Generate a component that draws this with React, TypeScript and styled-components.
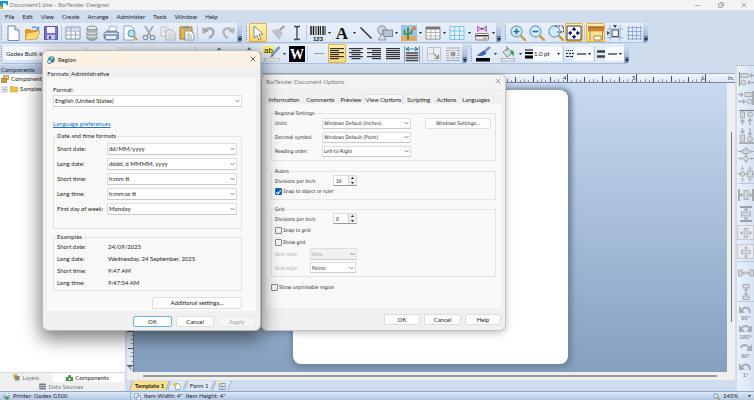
import React from 'react';
import styled, { createGlobalStyle, css } from 'styled-components';

const Global = createGlobalStyle`
  * { box-sizing: border-box; }
  html, body { margin: 0; height: 100%; overflow: hidden; }
  body { font-family: Lato, "Open Sans", sans-serif; font-size: 6px; line-height: 8px; color: #1e1e1e; }
  button, input, select, fieldset, legend { margin: 0; padding: 0; border: 0; min-width: 0; font: inherit; color: inherit; }
  button { background: none; }
`;

const Window = styled.div`
  position: relative;
  display: flex;
  flex-direction: column;
  height: 100vh;
  overflow: hidden;
  background: #cfdcee;
`;

/* ---------- title bar and menu ---------- */

const TitleBar = styled.header`
  display: flex;
  align-items: center;
  height: 10px;
  padding-right: 6px;
  background: #f3f3f3;
  color: #808080;
`;
const AppTitle = styled.h1`
  flex: 1;
  margin: 0 0 0 2px;
  font-size: 6px;
  font-weight: 400;
`;
const Caption = styled.button`
  display: grid;
  place-items: center;
  width: 23px;
  height: 10px;
  &:last-child { width: 9px; margin-left: 7px; }
`;
const MenuBar = styled.nav`
  display: flex;
  align-items: center;
  gap: 8px;
  height: 13px;
  padding-left: 5px;
`;
const MenuItem = styled.button`
  color: #1c1c28;
`;

/* ---------- toolbars ---------- */

const ToolRow = styled.div`
  display: flex;
  gap: 4px;
  height: 20px;
  margin-bottom: 1px;
  padding-left: 1px;
`;
const Group = styled.div`
  display: flex;
  align-items: center;
  flex: none;
  height: 20px;
  border-bottom: 1px solid #aabfdd;
  border-radius: 2px;
  background: linear-gradient(#e7effa, #dbe6f5);
`;
const Handle = styled.span`
  flex: none;
  width: 3px;
  height: 15px;
  border-left: 1px dotted #8295b5;
`;
const Sep = styled.span`
  flex: none;
  width: 1px;
  height: 16px;
  margin: 0 1px;
  background: #b9cbe4;
`;
const Tool = styled.button<{ $w?: number; $on?: boolean }>`
  display: grid;
  place-items: center;
  flex: none;
  width: ${p => p.$w ?? 19}px;
  height: 19px;
  ${p => p.$on && css`
    border: 1px solid #e3b04c;
    border-radius: 1px;
    background: linear-gradient(#fff0b8, #ffd768);
  `}
`;
const Drop = styled.button<{ $w?: number }>`
  display: grid;
  place-items: center;
  flex: none;
  width: ${p => p.$w ?? 5}px;
  height: 19px;
`;
const Overflow = styled.button`
  display: grid;
  place-items: end center;
  flex: none;
  width: 5px;
  height: 19px;
  padding-bottom: 1px;
  border-radius: 0 2px 2px 0;
  background: linear-gradient(#d3e0f2, #8fa5c8);
`;
const ComboBox = styled.select<{ $w: number; $gap: number }>`
  appearance: none;
  width: ${p => p.$w}px;
  height: 13px;
  margin-right: ${p => p.$gap}px;
  padding-left: 2px;
  background: #f6f9fd;
`;
const StyleBox = styled.button<{ $w: number }>`
  display: flex;
  align-items: center;
  justify-content: space-between;
  width: ${p => p.$w}px;
  height: 14px;
  padding: 0 2px 0 1px;
  background: linear-gradient(90deg, transparent 9px, #f6f9fd 9px, #f6f9fd);
`;

/* ---------- workspace ---------- */

const Workspace = styled.main`
  display: grid;
  grid-template-columns: 125px minmax(0, 1fr) 17px;
  column-gap: 2px;
  flex: 1;
  min-height: 0;
`;
const SidePanel = styled.aside`
  display: flex;
  flex-direction: column;
  background: #ffffff;
`;
const SideTitle = styled.h2`
  height: 9px;
  margin: 0;
  padding-left: 1px;
  background: linear-gradient(#c3d2e6, #adc0da);
  font-size: 6px;
  line-height: 9px;
  font-weight: 400;
`;
const Tree = styled.ul`
  flex: 1;
  margin: 0;
  padding: 0;
  list-style: none;
`;
const TreeItem = styled.li`
  display: flex;
  align-items: center;
  gap: 2px;
  height: 10px;
  padding-left: 1px;
`;
const SideTabs = styled.div`
  display: flex;
  flex-wrap: wrap;
  height: 19px;
  border-top: 1px solid #d6d6d6;
  background: #f0f0f0;
`;
const SideTab = styled.button<{ $w: string; $active?: boolean }>`
  display: flex;
  align-items: center;
  justify-content: center;
  gap: 2px;
  width: ${p => p.$w};
  height: 9px;
  background: ${p => (p.$active ? '#ffffff' : 'transparent')};
  color: ${p => (p.$active ? '#1e1e1e' : '#747474')};
`;
const Editor = styled.section`
  display: grid;
  grid-template-columns: 7px minmax(0, 1fr) 8px;
  grid-template-rows: 10px minmax(0, 1fr) 8px 11px;
  margin-top: 8px;
`;
const RulerTop = styled.div`
  grid-column: 1 / -1;
  display: flex;
  padding-left: 7px;
  border-top: 1px solid #a4adbb;
  border-bottom: 1px solid #7b8798;
  background: linear-gradient(#f1f6fd, #dde7f5);
`;
const RulerLeft = styled.div`
  border-right: 1px solid #66748a;
  background: #e2ebf7;
`;
const Canvas = styled.div`
  display: flex;
  overflow: hidden;
  padding: 7px 0 8px 159px;
  background: linear-gradient(#c8daf1, #859fbf);
`;
const Label = styled.div`
  width: 275px;
  border-radius: 8px;
  background: #ffffff;
  box-shadow: 1px 1px 5px 3px #71869f;
`;
const ScrollY = styled.div`
  display: flex;
  justify-content: center;
  padding: 49px 0 50px;
  background: #efefef;
`;
const ScrollX = styled.div`
  grid-column: 1 / -1;
  display: flex;
  align-items: center;
  padding: 0 18px 0 16px;
  background: #efefef;
`;
const Thumb = styled.span<{ $vertical?: boolean }>`
  flex: ${p => (p.$vertical ? 'none' : '1')};
  width: ${p => (p.$vertical ? '1px' : 'auto')};
  height: ${p => (p.$vertical ? 'auto' : '2px')};
  background: ${p => (p.$vertical ? '#777777' : '#999999')};
`;
const PageTabs = styled.div`
  grid-column: 1 / -1;
  display: flex;
  align-items: center;
  gap: 1px;
  padding-left: 4px;
`;
const PageTab = styled.button<{ $active?: boolean }>`
  display: flex;
  align-items: center;
  height: 9px;
  padding: 0 3px;
  border: solid #9fb2ce;
  border-width: 0 1px;
  transform: skewX(-20deg);
  background: ${p => (p.$active ? '#ffdf86' : '#dfe9f6')};
  > * { transform: skewX(20deg); }
`;
const PageName = styled.span<{ $strong?: boolean }>`
  font-weight: ${p => (p.$strong ? 700 : 400)};
`;

/* ---------- right hand arrange bar ---------- */

const ArrangeBar = styled.div`
  display: flex;
  flex-direction: column;
  align-items: center;
  overflow: hidden;
  border-top: 1px dotted #8b9cb8;
  padding-top: 3px;
  background: linear-gradient(90deg, #eaf1fb, #d6e3f4);
`;
const ArrangeTool = styled.button<{ $framed?: boolean }>`
  display: grid;
  place-items: center;
  flex: none;
  width: 17px;
  height: 19px;
  ${p => p.$framed && css`
    height: 15px;
    margin: 2px 0;
    border: 1px solid #c5c9cf;
    background: #e9ebee;
  `}
`;
const ArrangeSep = styled.span`
  flex: none;
  width: 16px;
  height: 1px;
  margin-bottom: 1px;
  background: #b3c6e0;
`;

/* ---------- status bar ---------- */

const StatusBar = styled.footer`
  display: flex;
  align-items: center;
  flex: none;
  height: 9px;
  border-top: 1px solid #8ea8cd;
  background: linear-gradient(#dfe9f7, #b3c8e5);
`;
const StatusCell = styled.span<{ $w?: string }>`
  display: flex;
  align-items: center;
  gap: 3px;
  width: ${p => p.$w ?? 'auto'};
  height: 8px;
  padding-left: 3px;
  white-space: pre;
  & + & { border-left: 1px solid #9bb2d3; }
`;
const Fill = styled.span`
  flex: 1;
`;

/* ---------- dialogs ---------- */

const Dialog = styled.section<{ $x: number; $y: number; $w: number; $front?: boolean }>`
  position: absolute;
  left: ${p => p.$x}px;
  top: ${p => p.$y}px;
  width: ${p => p.$w}px;
  border-radius: 5px;
  overflow: hidden;
  background: #f0f0f0;
  box-shadow: ${p => (p.$front
    ? '0 0 0 1px #b9b9b9, 0 6px 18px 3px rgba(0, 0, 0, 0.5)'
    : '0 0 0 1px #c3c3c3, 0 2px 8px rgba(0, 0, 0, 0.3)')};
`;
const DialogTitle = styled.header<{ $front?: boolean }>`
  display: flex;
  align-items: center;
  gap: 3px;
  height: ${p => (p.$front ? 17 : 14)}px;
  margin-bottom: ${p => (p.$front ? 0 : 5)}px;
  padding: 0 4px;
  background: ${p => (p.$front ? '#f9f1e1' : '#f3f3f3')};
  color: ${p => (p.$front ? '#1e1e1e' : '#808080')};
`;
const DialogName = styled.h2`
  flex: 1;
  margin: 0;
  font-size: 6px;
  font-weight: 400;
`;
const TabStrip = styled.div`
  display: flex;
  align-items: flex-end;
  height: 10px;
  padding-left: 3px;
`;
const Tab = styled.button<{ $active?: boolean; $w: number }>`
  flex: none;
  width: ${p => p.$w}px;
  height: ${p => (p.$active ? 10 : 9)}px;
  border: 1px solid ${p => (p.$active ? '#e3e3e3' : '#ececec')};
  border-bottom: 0;
  background: ${p => (p.$active ? '#f9f9f9' : '#f1f1f1')};
  white-space: nowrap;
`;
const Sheet = styled.div<{ $pad: string; $compact?: boolean }>`
  display: flex;
  flex-direction: column;
  margin: 0 4px;
  padding: ${p => p.$pad};
  background: #f9f9f9;
  ${p => p.$compact && css`
    font-family: "DejaVu Sans Condensed", "DejaVu Sans", sans-serif;
    font-size: 5px;
  `}
`;
const Frame = styled.fieldset<{ $top: number; $bottom?: number; $mt?: number }>`
  display: block;
  margin-top: ${p => p.$mt ?? 4}px;
  padding: ${p => p.$top}px 4px ${p => p.$bottom ?? 2}px 3px;
  border: 1px solid #e4e4e4;
  legend { height: 8px; padding: 0 1px; margin-left: -1px; }
`;
const Line = styled.div<{ $h: number; $gap?: number }>`
  display: flex;
  align-items: center;
  flex: none;
  height: ${p => p.$h}px;
  margin-top: ${p => p.$gap ?? 0}px;
`;
const Name = styled.label<{ $w?: number; $muted?: boolean }>`
  flex: none;
  width: ${p => (p.$w ? `${p.$w}px` : 'auto')};
  color: ${p => (p.$muted ? '#a3a3a3' : 'inherit')};
  white-space: nowrap;
`;
const Picker = styled.span<{ $w?: number }>`
  display: grid;
  align-items: center;
  flex: ${p => (p.$w ? 'none' : '1')};
  width: ${p => (p.$w ? `${p.$w}px` : 'auto')};
  > * { grid-area: 1 / 1; }
  > svg { justify-self: end; margin-right: 2px; pointer-events: none; }
`;
const Select = styled.select<{ $h?: number }>`
  appearance: none;
  width: 100%;
  height: ${p => p.$h ?? 12}px;
  padding: 0 8px 0 1px;
  border: 1px solid #dedede;
  border-bottom-color: #c9c9c9;
  border-radius: 1px;
  background: #ffffff;
  opacity: 1;
  &:disabled { background: #f1f1f1; color: #a0a0a0; }
`;
const Link = styled.a`
  align-self: flex-start;
  margin-top: 12px;
  color: #1a76c9;
`;
const PushButton = styled.button<{ $w: number; $h?: number; $default?: boolean }>`
  width: ${p => p.$w}px;
  height: ${p => p.$h ?? 11}px;
  border: 1px solid ${p => (p.$default ? '#6ab2ea' : '#dedede')};
  border-radius: 2px;
  background: #fdfdfd;
  &:disabled { background: #f5f5f5; border-color: #e9e9e9; color: #a0a0a0; }
`;
const DialogFooter = styled.footer<{ $pad: string }>`
  display: flex;
  justify-content: flex-end;
  gap: 4px;
  padding: ${p => p.$pad};
`;
const Check = styled.input`
  appearance: none;
  display: grid;
  place-items: center;
  width: 7px;
  height: 7px;
  margin-right: 1px;
  border: 1px solid #8a8a8a;
  border-radius: 1px;
  background: #f7f7f7;
  &:checked { border-color: #1264b4; background: #1264b4; }
  &:checked::after {
    content: "";
    width: 2px;
    height: 4px;
    border: solid #ffffff;
    border-width: 0 1px 1px 0;
    transform: rotate(40deg);
  }
`;
const Spinner = styled.span`
  display: flex;
  width: 24px;
  height: 11px;
  border: 1px solid #dcdcdc;
  border-bottom-color: #9b9b9b;
  background: #ffffff;
`;
const SpinInput = styled.input`
  flex: 1;
  appearance: textfield;
  padding-left: 2px;
  background: transparent;
  &::-webkit-inner-spin-button { appearance: none; }
`;
const SpinButtons = styled.span`
  display: flex;
  flex-direction: column;
  width: 8px;
  background: #eeeeee;
  border-left: 1px solid #d4d4d4;
`;
const SpinButton = styled.button`
  display: grid;
  place-items: center;
  flex: 1;
`;

/* ---------- drawings ---------- */

type Draw = { children: React.ReactNode; w?: number; h?: number; box?: string };
const Svg = ({ children, w = 16, h = 16, box = '0 0 16 16' }: Draw) => (
  <svg width={w} height={h} viewBox={box} fill="none" aria-hidden="true">{children}</svg>
);
const Arrow = () => <Svg w={3} h={2} box="0 0 3 2"><path d="M0 0h3L1.500 2z" fill="#222" /></Svg>;
const Chevron = () => <Svg w={5} h={4} box="0 0 5 4"><path d="M.5 1l2 2 2-2" stroke="#777" strokeWidth=".8" /></Svg>;
const Cross = ({ c }: { c: string }) => <Svg w={6} h={6} box="0 0 6 6"><path d="M.7.7l4.600 4.600M5.300.7L.7 5.300" stroke={c} strokeWidth=".8" /></Svg>;
const More = () => <Svg w={4} h={5} box="0 0 4 5"><path d="M0 .5h4M0 2h4L2 5z" stroke="#23314f" strokeWidth=".5" fill="#23314f" /></Svg>;
const Lines = ({ mode }: { mode: 'l' | 'c' | 'r' | 'j' }) => (
  <Svg>
    {[0, 1, 2, 3, 4, 5].map(i => {
      const len = mode === 'j' || i % 2 === 0 ? 14 : 9;
      const x = mode === 'r' ? 15 - len : mode === 'c' ? 8 - len / 2 : 1;
      return <rect key={i} x={x} y={2 + i * 2} width={len} height="1.200" fill="#333" />;
    })}
  </Svg>
);
const Lens = ({ children }: { children?: React.ReactNode }) => (
  <Svg>
    <path d="M10 10l5 5" stroke="#c99b3f" strokeWidth="2.400" strokeLinecap="round" />
    <circle cx="6.500" cy="6.500" r="5.500" fill="#d2eefb" stroke="#7da7bd" strokeWidth="1.300" />
    {children}
  </Svg>
);

const icons: Record<string, React.ReactNode> = {
  newDoc: <Svg><path d="M3 1h7l4 4v10.500H3z" fill="#fff" stroke="#7588a8" /><path d="M10 1v4h4" fill="#dfe8f5" stroke="#7588a8" /></Svg>,
  open: <Svg><path d="M1 5l1-1h4l1 1h6v9H1z" fill="#d99a2b" /><path d="M3 8l13-2-3 8-12 1z" fill="#ffd873" stroke="#c98b25" strokeWidth=".6" /><path d="M8 3c2-2 5-1 6 1m.5-2.500V5h-3" stroke="#5687bd" strokeWidth="1.200" /></Svg>,
  save: <Svg><path d="M1.500 1.500h13v13h-13z" fill="#7d74cf" stroke="#5a52a8" /><rect x="4" y="2" width="8" height="6" fill="#f4f6fc" /><rect x="4" y="10" width="8" height="4.500" fill="#c9cdea" /><rect x="6" y="11" width="2" height="3" fill="#544ca3" /></Svg>,
  table: <Svg><path d="M1 2h14v12H1z" fill="#fff" stroke="#8694aa" /><path d="M1.500 2.500h13v2h-13z" fill="#c4d2e6" /><path d="M6 2v12M1 6h14M1 10h14M10.500 6v8" stroke="#9aa9c0" /></Svg>,
  db: <Svg><path d="M3 3v10c0 3 10 3 10 0V3" fill="#a9b3ba" stroke="#76828a" strokeWidth=".8" /><path d="M3 6.500c0 2.500 10 2.500 10 0M3 10c0 2.500 10 2.500 10 0" stroke="#e8edf0" /><ellipse cx="8" cy="3" rx="5" ry="2" fill="#dfe5e8" stroke="#76828a" strokeWidth=".8" /></Svg>,
  print: <Svg><path d="M5 7l2-6 7 1-2 6z" fill="#fff" stroke="#7f93b3" strokeWidth=".7" /><path d="M1 8l3-2h9l3 2v5l-3 2H3l-2-2z" fill="#8da2c1" stroke="#536a8e" strokeWidth=".7" /><path d="M3 11h10v3H3z" fill="#e9eff8" /><path d="M1.500 8.500h13" stroke="#dfe9f8" /></Svg>,
  preview: <Svg><path d="M2 1h7l3 3v11H2z" fill="#fff" stroke="#7f93b3" strokeWidth=".8" /><circle cx="9.500" cy="8.500" r="3.500" fill="#a8e1ef" stroke="#5a95a9" /><path d="M12 11l3 4" stroke="#d19b3c" strokeWidth="2" /></Svg>,
  cut: <Svg><path d="M4 1l6 10M12 1L6 11" stroke="#a0a5ac" strokeWidth="1.500" /><circle cx="4.500" cy="12.500" r="2.200" stroke="#8f949b" strokeWidth="1.300" /><circle cx="11.500" cy="12.500" r="2.200" stroke="#8f949b" strokeWidth="1.300" /></Svg>,
  copy: <Svg><path d="M1 2h6l2 2v7H1z" fill="#eceef1" stroke="#b3b8bf" strokeWidth=".8" /><path d="M6 5h6l3 3v7H6z" fill="#e6e8eb" stroke="#a6abb2" strokeWidth=".8" /><path d="M8 9h5M8 11h5M8 13h5M3 5h3M3 7h3" stroke="#bcc0c6" strokeWidth=".7" /></Svg>,
  paste: <Svg><path d="M1 2h12v12H1z" fill="#e9b64a" stroke="#a9772a" /><path d="M4 1h6v3H4z" fill="#8e98a6" /><path d="M6 6h6l3 3v6H6z" fill="#fff" stroke="#6f83a5" strokeWidth=".8" /><path d="M8 9h3M8 11h5M8 13h5" stroke="#6b7b96" strokeWidth=".7" /></Svg>,
  undo: <Svg><path d="M4 5c5-4 10 0 8 4-.5 2-2 3-4 4" stroke="#a7abb1" strokeWidth="2.400" /><path d="M1 2l1 7 6-3z" fill="#a7abb1" /></Svg>,
  redo: <Svg><path d="M12 5C7 1 2 5 4 9c.5 2 2 3 4 4" stroke="#b3b7bc" strokeWidth="2.400" /><path d="M15 2l-1 7-6-3z" fill="#b3b7bc" /></Svg>,
  pointer: <Svg><path d="M4 1v12l3-2.500 2 4.500 2-1-2-4.500 4-.5z" fill="#fff" stroke="#6c7f9e" strokeWidth=".9" /></Svg>,
  brush: <Svg><path d="M14.500 1l-6 5" stroke="#9b9b9b" strokeWidth="2" /><path d="M1 5l8-1 4 4-4 7z" fill="#c6c8ca" /><path d="M4 6l6 7M7 5l5 5" stroke="#a4a6a8" strokeWidth=".8" /></Svg>,
  ibeam: <Svg><path d="M5 1.500h2l1 1 1-1h2M5 14.500h2l1-1 1 1h2M8 2.500v11" stroke="#444" strokeWidth="1.300" /></Svg>,
  barcode: <Svg><path d="M1 1v9M3.500 1v9M8.500 1v9M13 1v9" stroke="#111" strokeWidth="1.400" /><path d="M6 1v9M10.500 1v9M15 1v9" stroke="#111" strokeWidth=".9" /><text x="8" y="15.500" fontSize="6" fontWeight="700" textAnchor="middle" fontFamily="Liberation Sans, sans-serif" fill="#111">123</text></Svg>,
  letter: <Svg><text x="8" y="13.500" fontSize="17" fontWeight="700" textAnchor="middle" fontFamily="Liberation Serif, serif" fill="#111">A</text></Svg>,
  line: <Svg><path d="M2.500 2.500l11 11" stroke="#222" strokeWidth="1.300" /></Svg>,
  shapes: <Svg><circle cx="5" cy="5" r="4.300" fill="#ccd5e0" stroke="#8593a6" /><rect x="6" y="5" width="9.500" height="6.500" fill="#b7c3d2" stroke="#7688a0" /><path d="M5 8l4 7H1.500z" fill="#d8dfe8" stroke="#8593a6" /></Svg>,
  picture: <Svg><rect width="16" height="16" fill="#9cc4e8" /><rect y="11" width="16" height="5" fill="#dfa95f" /><circle cx="13" cy="3.500" r="2" fill="#f2734d" /><path d="M7 14V3M3.500 5.500v3.500H7M10.500 5.500v3H7" stroke="#3f8a37" strokeWidth="1.700" strokeLinejoin="round" strokeLinecap="round" /></Svg>,
  form: <Svg><path d="M1 2h14v12H1z" fill="#fff" stroke="#777" strokeWidth=".8" /><path d="M1 2h14v2.500H1z" fill="#777" /><path d="M1 7.500h14M1 11h14M6 4v10M10.500 4v10" stroke="#a5a5a5" strokeWidth=".8" /></Svg>,
  cells: <Svg><path d="M1 1.500h14v13H1zM5.500 1.500v13M10.500 1.500v13M1 6h14M1 10.500h14" fill="#e6f5fd" stroke="#7cc4ea" /></Svg>,
  encoder: <Svg><path d="M3.500 1l3.500 2.700-3.500 2.800zM12.500 1L9 3.700l3.500 2.800z" fill="#e3b6ea" stroke="#b25bc0" strokeWidth=".9" /><circle cx="8" cy="3.700" r="1.300" fill="#a04ab0" /><rect x="1.500" y="8.500" width="13" height="6.500" rx="1" fill="#ededed" stroke="#777" strokeWidth=".9" /><path d="M2 10.700h12" stroke="#333" strokeWidth="1.400" /><path d="M9 13.300h4" stroke="#c77a39" /></Svg>,
  zoomIn: <Lens><path d="M3.500 6.500h6M6.500 3.500v6" stroke="#2f6d98" strokeWidth="1.600" /></Lens>,
  zoomOut: <Lens><path d="M3.500 6.500h6" stroke="#2f6d98" strokeWidth="1.600" /></Lens>,
  zoomSel: <Lens><path d="M7 1h8.500v6H9" stroke="#273e67" strokeWidth="1.200" strokeDasharray="2 1.200" /></Lens>,
  fit: <Svg><path d="M1 1h14v14H1z" fill="#fff" stroke="#3a3a3a" /><path d="M8 2l2.500 3h-5zM8 14l2.500-3h-5zM2 8l3-2.500v5zM14 8l-3-2.500v5z" fill="#12127c" /><path d="M8 4v2M8 10v2M4 8h2M10 8h2" stroke="#12127c" strokeWidth="1.400" /></Svg>,
  rulers: <Svg><rect x="0" y="1.500" width="16" height="4.500" fill="#e08e3a" stroke="#b06a23" strokeWidth=".6" /><path d="M2 2v2.500M4 2v1.500M6 2v2.500M8 2v1.500M10 2v2.500M12 2v1.500M14 2v2.500" stroke="#6b3b0c" strokeWidth=".7" /><path d="M2 6v9M14.500 6v9M6 11h7v4H6z" stroke="#8c8463" strokeWidth=".9" fill="#fffbea" /></Svg>,
  snap: <Svg><path d="M3 0v16M13 0v16M0 4h16M0 12.500h16" stroke="#93b4dc" /><rect x="5" y="5" width="6.500" height="6.500" fill="#eee" stroke="#555" /><path d="M6 0h4L8 3zM0 6v4l3-2z" fill="#27458e" /></Svg>,
  grid: <Svg><path d="M2.500 1v14M6.500 1v14M10.500 1v14M14.500 1v14M1 2.500h15M1 6.500h15M1 10.500h15M1 14h15" stroke="#8daedb" /></Svg>,
  bold: <Svg><text x="8" y="14" fontSize="15" fontWeight="700" textAnchor="middle" fontFamily="Liberation Serif, serif" fill="#222">B</text></Svg>,
  italic: <Svg><text x="8" y="14" fontSize="15" fontStyle="italic" textAnchor="middle" fontFamily="Liberation Serif, serif" fill="#222">I</text></Svg>,
  under: <Svg><text x="8" y="14" fontSize="15" fontWeight="700" textAnchor="middle" fontFamily="Liberation Serif, serif" fill="#222">U</text></Svg>,
  strike: <Svg><text x="8" y="14" fontSize="15" textAnchor="middle" fontFamily="Liberation Serif, serif" fill="#222">S</text></Svg>,
  fontUp: <Svg><path d="M4 7l4-4 4 4" stroke="#3f78b5" strokeWidth="2" /></Svg>,
  fontColor: <Svg><path d="M8 1l6 8H3z" fill="#3d7ba7" /><rect x="1" y="12" width="14" height="3" fill="#222" /></Svg>,
  highlight: <Svg w={18} box="0 0 18 16"><rect width="11" height="8" fill="#f7ef6c" /><text x="5.500" y="6.500" fontSize="8" textAnchor="middle" fontFamily="Liberation Sans, sans-serif" fill="#222">ab</text><path d="M16.500 1L9 9" stroke="#7898c6" strokeWidth="2.600" /><path d="M9 8l-2.500 3.500L11 10z" fill="#8c7a55" /><rect x="1.500" y="12.500" width="15" height="2.500" fill="#eee" stroke="#aaa" strokeWidth=".6" /></Svg>,
  white: <Svg><rect width="16" height="16" fill="#000" /><text x="8" y="13" fontSize="14" fontWeight="700" textAnchor="middle" fontFamily="Liberation Serif, serif" fill="#fff">W</text></Svg>,
  dash: <Svg><path d="M3 7.500h10" stroke="#9a9a9a" /></Svg>,
  fitText: <Svg><path d="M.7 0v16M15.300 0v16" stroke="#7a8797" /><path d="M2 3h12M5 1L2.500 3 5 5m6-4l2.500 2L11 5" stroke="#3a88a6" strokeWidth="1.200" /><path d="M2 7h12M2 9.500h12M2 12h12M2 14.500h12" stroke="#444" strokeWidth="1.300" /></Svg>,
  resize: <Svg><path d="M1.500 1.500h13v13h-13zM1.500 8h6V1.500" fill="#ececec" stroke="#c2c2c2" /><path d="M8 8l4 4m.5-3.500v4h-4" stroke="#8c8c8c" strokeWidth="1.200" /></Svg>,
  wrap: <Svg><path d="M1 2h14M1 4.500h14M1 7h3M12 7h3M1 9.500h3M12 9.500h3M1 12h14M1 14.500h14" stroke="#a9a9a9" /><path d="M4.500 4.500h7v7h-7z" fill="#eee" /><circle cx="8" cy="8" r="2.600" fill="#999" /></Svg>,
  lineColor: <Svg><path d="M15 1L9 6" stroke="#7f95c5" strokeWidth="2.600" /><path d="M9.500 5c-3-1-4 4-8.500 4 4 2 9 1 10.500-2z" fill="#3f63b4" /><rect x="1" y="12" width="14" height="3.500" fill="#000" /></Svg>,
  fillColor: <Svg><path d="M3 6l5-4 4 5-5 4z" fill="#d8dde4" stroke="#7c8692" /><path d="M7 0v5" stroke="#7c8692" /><path d="M11 4c3 0 3.500 3 2.500 7-1-2-1-3-3-3z" fill="#3fa648" /><rect x="1.500" y="12.500" width="13" height="2.500" fill="#eef1f6" stroke="#999" strokeWidth=".7" /></Svg>,
};

const Thick = () => <Svg w={9} h={10} box="0 0 9 10"><path d="M0 1h8" stroke="#000" /><path d="M0 4h8" stroke="#000" strokeWidth="2" /><path d="M0 8h8" stroke="#000" strokeWidth="3" /></Svg>;
const Dashes = () => <Svg w={9} h={10} box="0 0 9 10"><path d="M0 1.500h8" stroke="#222" strokeDasharray="1 1" /><path d="M0 4.500h8" stroke="#222" strokeDasharray="2 1" /><path d="M0 7.500h8" stroke="#222" strokeDasharray="3 1" /></Svg>;
const Pair = () => <Svg w={9} h={10} box="0 0 9 10"><path d="M0 2.500h8M0 7.500h8" stroke="#444" strokeWidth="2.500" /></Svg>;
const Stroke = () => <Svg w={9} h={2} box="0 0 9 2"><path d="M0 1h9" stroke="#222" strokeWidth="1.200" /></Svg>;

/* Arrange icons: grey shapes with small arrows. */
const g = '#a9adb3';
const f = '#d5d7da';
const arrange: Record<string, React.ReactNode> = {
  left: <Svg><path d="M1.500 1v14" stroke="#888" strokeWidth="1.200" /><rect x="3" y="2.500" width="7" height="4" fill={f} stroke={g} /><circle cx="5.500" cy="11.500" r="2.500" fill={f} stroke={g} /><path d="M16 4.500h-4m2-2l-2 2 2 2M16 11.500h-6m2-2l-2 2 2 2" stroke={g} strokeWidth="1.300" /></Svg>,
  right: <Svg><path d="M15 1v14" stroke="#888" strokeWidth="1.200" /><rect x="7" y="2.500" width="7" height="4" fill={f} stroke={g} /><circle cx="11.500" cy="11.500" r="2.500" fill={f} stroke={g} /><path d="M0 4.500h5m-2-2l2 2-2 2M0 11.500h7m-2-2l2 2-2 2" stroke={g} strokeWidth="1.300" /></Svg>,
  top: <Svg><path d="M1 1.500h15" stroke="#888" strokeWidth="1.200" /><rect x="2.500" y="3" width="4" height="6" fill={f} stroke={g} /><circle cx="12" cy="5.500" r="2.500" fill={f} stroke={g} /><path d="M4.500 16v-5m-2 2l2-2 2 2M12 16v-6m-2 2l2-2 2 2" stroke={g} strokeWidth="1.300" /></Svg>,
  bottom: <Svg><path d="M1 15h15" stroke="#888" strokeWidth="1.200" /><rect x="2.500" y="7" width="4" height="6" fill={f} stroke={g} /><circle cx="12" cy="11" r="2.500" fill={f} stroke={g} /><path d="M4.500 0v5m-2-2l2 2 2-2M12 0v7m-2-2l2 2 2-2" stroke={g} strokeWidth="1.300" /></Svg>,
  center: <Svg><path d="M8 0v16" stroke="#888" /><rect x="5" y="2.500" width="6" height="4" fill={f} stroke={g} /><circle cx="8" cy="11.500" r="2.400" fill={f} stroke={g} /><path d="M0 4.500h4m-1.500-1.500L4 4.500 2.500 6M16 4.500h-4m1.500-1.500L12 4.500 13.500 6M0 11.500h4M16 11.500h-4M2.500 10L4 11.500 2.500 13m11-3L12 11.500l1.500 1.500" stroke={g} /></Svg>,
  middle: <Svg><path d="M0 8h16" stroke="#888" /><rect x="9.500" y="5" width="5" height="6" fill={f} stroke={g} /><circle cx="4.500" cy="8" r="2.400" fill={f} stroke={g} /><path d="M4.500 0v4m-1.500-1.500L4.500 4 6 2.500M4.500 16v-4m-1.500 1.500L4.500 12 6 13.500M12 0v4m-1.500-1.500L12 4l1.500-1.500M12 16v-4m-1.500 1.500L12 12l1.500 1.500" stroke={g} /></Svg>,
  hPage: <Svg><path d="M1 2v12M15 2v12" stroke="#888" strokeWidth="1.300" /><rect x="6" y="3.500" width="4" height="9" fill={f} stroke={g} /><path d="M2 8h3m-1.500-2v4M14 8h-3m1.500-2v4" stroke={g} strokeWidth="1.300" /></Svg>,
  vPage: <Svg><path d="M2 1h12M2 15h12" stroke="#888" strokeWidth="1.300" /><rect x="3.500" y="6" width="9" height="4" fill={f} stroke={g} /><path d="M8 2v3m-2-1.500h4M8 14v-3m-2 1.500h4" stroke={g} strokeWidth="1.300" /></Svg>,
  hBox: <Svg w={14} h={12}><rect x="5.500" y="2" width="5" height="12" fill={f} stroke={g} /><path d="M0 8h4M2.500 6v4M16 8h-4m1.500-2v4" stroke={g} strokeWidth="1.600" /></Svg>,
  vBox: <Svg w={14} h={12}><rect x="2" y="5.500" width="12" height="5" fill={f} stroke={g} /><path d="M8 0v4M6 2.500h4M8 16v-4m-2 1.500h4" stroke={g} strokeWidth="1.600" /></Svg>,
  hSpace: <Svg><rect x=".5" y="5" width="3.500" height="6" fill={f} stroke={g} /><rect x="12" y="5" width="3.500" height="6" fill={f} stroke={g} /><path d="M5 8h6M6.500 6.500L5 8l1.500 1.500m3-3L11 8 9.500 9.500" stroke={g} strokeWidth="1.200" /></Svg>,
  vSpace: <Svg><rect x="5" y=".5" width="6" height="3.500" fill={f} stroke={g} /><rect x="5" y="12" width="6" height="3.500" fill={f} stroke={g} /><path d="M8 5v6M6.500 6.500L8 5l1.500 1.500m-3 3L8 11l1.500-1.500" stroke={g} strokeWidth="1.200" /></Svg>,
};
const Turn = ({ label, cw, both }: { label: string; cw?: boolean; both?: boolean }) => (
  <Svg w={17} box="0 0 17 16">
    <path d={cw ? 'M4 5c1-4 6-4 8 0' : both ? 'M4 5c2-4 7-4 9 0' : 'M5 5c2-4 8-3 8 3'} stroke={g} strokeWidth="2" />
    {(!cw || both) && <path d="M2 1v7h6z" fill={g} />}
    {(cw || both) && <path d="M15 1v7H9z" fill={g} />}
    <text x="8.500" y="15" fontSize="6" textAnchor="middle" fontFamily="Liberation Sans, sans-serif" fill="#777">{label}</text>
  </Svg>
);

const AppLogo = () => <Svg w={8} h={8} box="0 0 8 8"><path d="M0 0h8v8H0z" fill="#1493d0" /><path d="M3 2h2l3 3v3H3z" fill="#fff" /><path d="M0 4l4 4H0z" fill="#f2b51c" /></Svg>;
const Globe = () => <Svg w={8} h={8} box="0 0 8 8"><circle cx="4.500" cy="3.500" r="3.300" fill="#3e8fd1" /><path d="M4 .5c2 0 3 2 1.500 2.500S3 4 4 1z" fill="#8ed07e" /><circle cx="2.500" cy="5.500" r="2" fill="#d7e6ee" stroke="#35566d" strokeWidth=".7" /><path d="M5 4.500l2 .5-1 1.500z" fill="#245b2d" /></Svg>;
const Cards = () => <Svg w={8} h={8} box="0 0 8 8"><path d="M2.500.5h5v4h-5z" fill="#e7c682" stroke="#8e6b2c" strokeWidth=".6" /><path d="M.5 3.500h5v4h-5z" fill="#d79c3d" stroke="#7d5a21" strokeWidth=".6" /></Svg>;
const Folder = () => <Svg w={8} h={8} box="0 0 8 8"><path d="M.3 1.500h3l.7.8h3.600v4.700H.3z" fill="#f2bf45" stroke="#c58d22" strokeWidth=".5" /></Svg>;
const Expand = () => <Svg w={7} h={7} box="0 0 7 7"><path d="M1 1h5v5H1zM3.500 2v3M2 3.500h3" fill="#fff" stroke="#8b9bb0" strokeWidth=".7" /></Svg>;
const LayersIcon = () => <Svg w={7} h={7} box="0 0 7 7"><rect width="4.500" height="4.500" fill="#e9b64c" /><rect x="2" y="2" width="4.500" height="4.500" fill="#868686" /></Svg>;
const PartsIcon = () => <Svg w={7} h={7} box="0 0 7 7"><path d="M0 3h2l.5-2h2L5 3h2v4H0z" fill="#3c9446" /><rect x="2.500" y="4" width="2" height="2" fill="#d8f0d4" /></Svg>;
const DataIcon = () => <Svg w={7} h={7} box="0 0 7 7"><rect y=".5" width="7" height="6" rx="1" fill="#6f7f92" /><path d="M0 2.500h7M0 4.500h7" stroke="#dde4ec" strokeWidth=".7" /></Svg>;
const AddPage = () => <Svg w={8} h={8} box="0 0 8 8"><path d="M2.500 1.500h3l2 2v4h-5z" fill="#fff" stroke="#6d86ad" strokeWidth=".7" /><circle cx="2.300" cy="2.300" r="1.800" fill="#f5b82e" /></Svg>;
const AddForm = () => <Svg w={8} h={8} box="0 0 8 8"><path d="M1.500 1.500h6v6h-6z" fill="#dce9f9" stroke="#5e7fb1" strokeWidth=".7" /><path d="M2 4.500h5M4.500 3v4" stroke="#5e7fb1" strokeWidth=".6" /><circle cx="2" cy="2" r="1.600" fill="#f5b82e" /></Svg>;
const PrinterIcon = () => <Svg w={7} h={7} box="0 0 7 7"><path d="M2 0h4v3H2z" fill="#fff" stroke="#8393aa" strokeWidth=".5" /><path d="M0 2.500h7v3H0z" fill="#9fb0c6" /><circle cx="4" cy="5.200" r="1.700" fill="#42a44d" /></Svg>;
const SizeIcon = () => <Svg w={7} h={7} box="0 0 7 7"><path d="M.5.5h4v4h-4zM3 2.500h3.500V7H3z" fill="#fff" stroke="#6f7f96" strokeWidth=".6" /></Svg>;

/* ---------- rulers ---------- */

const INCH = 69;
const tickSize = (n: number) => (n % 16 === 0 ? 9 : n % 8 === 0 ? 6 : n % 4 === 0 ? 5 : n % 2 === 0 ? 3 : 2);

const HorizontalRuler = () => (
  <svg width="100%" height="8" aria-hidden="true">
    {Array.from({ length: 98 }, (_, n) => {
      const x = 157 + Math.round((n * INCH) / 16);
      return (
        <g key={n}>
          <rect x={x} y={8 - tickSize(n)} width="1" height={tickSize(n)} fill={n % 4 === 0 ? '#4a5260' : '#8d97a6'} />
          {n > 0 && n % 16 === 0 && <text x={x - 4} y="6" fontSize="6" fill="#333">{n / 16}</text>}
        </g>
      );
    })}
    <text x="594" y="6" fontSize="6" fill="#334">in.</text>
  </svg>
);
const VerticalRuler = () => (
  <svg width="6" height="100%" aria-hidden="true">
    {Array.from({ length: 68 }, (_, n) => {
      const y = 6 + Math.round((n * INCH) / 16);
      const size = Math.min(tickSize(n), 6);
      return <rect key={n} x={6 - size} y={y} width={size} height="1" fill={n % 4 === 0 ? '#4a5260' : '#8d97a6'} />;
    })}
    <text transform="translate(5 286) rotate(-90)" fontSize="6" fill="#333">4</text>
  </svg>
);

/* ---------- composed pieces ---------- */

type ToolSpec = { i: string; w?: number; on?: boolean; drop?: boolean; sep?: boolean; name: string };
const ToolList = ({ items }: { items: ToolSpec[] }) => (
  <>
    {items.map(t => (
      <React.Fragment key={t.i}>
        {t.sep && <Sep />}
        <Tool $w={t.w} $on={t.on} aria-label={t.name}>{icons[t.i]}</Tool>
        {t.drop && <Drop aria-label={`${t.name} menu`}><Arrow /></Drop>}
      </React.Fragment>
    ))}
  </>
);

const fileTools: ToolSpec[] = [
  { i: 'newDoc', name: 'New', w: 18 }, { i: 'open', name: 'Open' }, { i: 'save', name: 'Save' },
  { i: 'table', name: 'Page setup', sep: true }, { i: 'db', name: 'Database setup' }, { i: 'print', name: 'Print' }, { i: 'preview', name: 'Print preview' },
  { i: 'cut', name: 'Cut' }, { i: 'copy', name: 'Copy' }, { i: 'paste', name: 'Paste' },
  { i: 'undo', name: 'Undo', sep: true }, { i: 'redo', name: 'Redo' },
];
const objectTools: ToolSpec[] = [
  { i: 'pointer', name: 'Select', w: 18, on: true }, { i: 'brush', name: 'Format painter', w: 21 }, { i: 'ibeam', name: 'Text cursor', w: 17 },
  { i: 'barcode', name: 'Barcode', drop: true, sep: true }, { i: 'letter', name: 'Text', w: 20, drop: true }, { i: 'line', name: 'Line', w: 18 },
  { i: 'shapes', name: 'Shape', drop: true }, { i: 'picture', name: 'Picture', drop: true }, { i: 'form', name: 'Table', drop: true },
  { i: 'cells', name: 'Layout grid', w: 20, drop: true }, { i: 'encoder', name: 'Encoder', drop: true },
];
const viewTools: ToolSpec[] = [
  { i: 'zoomIn', name: 'Zoom in' }, { i: 'zoomOut', name: 'Zoom out' }, { i: 'zoomSel', name: 'Zoom to selection' },
  { i: 'fit', name: 'Fit to window', w: 18, on: true }, { i: 'rulers', name: 'Rulers', on: true, sep: true },
  { i: 'snap', name: 'Snap' }, { i: 'grid', name: 'Grid' },
];
const textTools: ToolSpec[] = [
  { i: 'bold', name: 'Bold', w: 18 }, { i: 'italic', name: 'Italic', w: 18 }, { i: 'under', name: 'Underline', w: 18 }, { i: 'strike', name: 'Strikeout', w: 18 },
  { i: 'fontUp', name: 'Grow font', w: 43, sep: true }, { i: 'fontColor', name: 'Font color', w: 17, drop: true },
  { i: 'highlight', name: 'Highlight', w: 20, drop: true }, { i: 'white', name: 'White on black' }, { i: 'dash', name: 'Dash', w: 19, sep: true },
];
const modes: { m: 'l' | 'c' | 'r' | 'j'; w: number; name: string }[] = [
  { m: 'l', w: 18, name: 'Align left' }, { m: 'c', w: 19, name: 'Align center' }, { m: 'r', w: 18, name: 'Align right' }, { m: 'j', w: 19, name: 'Justify' },
];

type PickProps = { id: string; value: string; w?: number; h?: number; disabled?: boolean };
const Pick = ({ id, value, w, h, disabled }: PickProps) => (
  <Picker $w={w}>
    <Select id={id} $h={h} disabled={disabled} defaultValue={value}><option>{value}</option></Select>
    <Chevron />
  </Picker>
);
const Divisions = ({ id, value }: { id: string; value: number }) => (
  <Line $h={11}>
    <Name htmlFor={id} $w={58}>Divisions per Inch:</Name>
    <Spinner>
      <SpinInput id={id} type="number" defaultValue={value} />
      <SpinButtons>
        <SpinButton aria-label="Increase"><Svg w={3} h={2} box="0 0 3 2"><path d="M0 2h3L1.500 0z" fill="#222" /></Svg></SpinButton>
        <SpinButton aria-label="Decrease"><Arrow /></SpinButton>
      </SpinButtons>
    </Spinner>
  </Line>
);

const formats = [
  ['Short date:', 'dd/MM/yyyy'], ['Long date:', 'dddd, d MMMM, yyyy'], ['Short time:', 'h:mm tt'],
  ['Long time:', 'h:mm:ss tt'], ['First day of week:', 'Monday'],
];
const examples = [
  ['Short date:', '24/09/2025'], ['Long date:', 'Wednesday, 24 September, 2025'], ['Short time:', '9:47 AM'], ['Long time:', '9:47:54 AM'],
];

const RegionDialog = () => (
  <Dialog $x={43} $y={51} $w={217} $front role="dialog" aria-label="Region">
    <DialogTitle $front><Globe /><DialogName>Region</DialogName><button aria-label="Close Region"><Cross c="#444" /></button></DialogTitle>
    <TabStrip><Tab $active $w={24}>Formats</Tab><Tab $w={38}>Administrative</Tab></TabStrip>
    <Sheet $pad="8px 14px 2px 6px">
      <Name htmlFor="format">Format:</Name>
      <Line $h={14}><Pick id="format" value="English (United States)" /></Line>
      <Link href="#language">Language preferences</Link>
      <Frame $top={3} $bottom={13}>
        <legend>Date and time formats</legend>
        {formats.map(([k, v], i) => (
          <Line key={k} $h={12} $gap={i ? 3 : 0}><Name htmlFor={`fmt${i}`} $w={50}>{k}</Name><Pick id={`fmt${i}`} value={v} /></Line>
        ))}
      </Frame>
      <Frame $top={0} $bottom={1}>
        <legend>Examples</legend>
        {examples.map(([k, v]) => <Line key={k} $h={12}><Name as="span" $w={51}>{k}</Name><span>{v}</span></Line>)}
      </Frame>
      <Line $h={12} $gap={6}><Fill /><PushButton $w={90} $h={12}>Additional settings...</PushButton></Line>
    </Sheet>
    <DialogFooter $pad="5px 4px 3px">
      <PushButton $w={39} $default>OK</PushButton><PushButton $w={38}>Cancel</PushButton><PushButton $w={38} disabled>Apply</PushButton>
    </DialogFooter>
  </Dialog>
);

const optionTabs: [string, number][] = [
  ['Information', 38], ['Comments', 35], ['Preview', 26], ['View Options', 39], ['Scripting', 31], ['Actions', 25], ['Languages', 34],
];

const OptionsDialog = () => (
  <Dialog $x={262} $y={75} $w={243} role="dialog" aria-label="BarTender Document Options">
    <DialogTitle><DialogName>BarTender Document Options</DialogName><button aria-label="Close options"><Cross c="#999" /></button></DialogTitle>
    <TabStrip>{optionTabs.map(([t, w]) => <Tab key={t} $w={w} $active={t === 'View Options'}>{t}</Tab>)}</TabStrip>
    <Sheet $compact $pad="5px 5px 11px">
      <Frame $top={0} $bottom={3} $mt={0}>
        <legend>Regional Settings</legend>
        <Line $h={12}><Name htmlFor="units" $w={47}>Units:</Name><Pick id="units" value="Windows Default (Inches)" w={89} h={11} /><Fill /><PushButton $w={66}>Windows Settings...</PushButton></Line>
        <Line $h={12} $gap={2}><Name htmlFor="decimal" $w={47}>Decimal symbol:</Name><Pick id="decimal" value="Windows Default (Point)" w={89} h={11} /></Line>
        <Line $h={12} $gap={2}><Name htmlFor="reading" $w={47}>Reading order:</Name><Pick id="reading" value="Left-to-Right" w={89} h={11} /></Line>
      </Frame>
      <Frame $top={0} $bottom={3} $mt={6}>
        <legend>Rulers</legend>
        <Divisions id="rulerDiv" value={16} />
        <Line $h={10}><Check type="checkbox" id="snapRuler" defaultChecked /><Name htmlFor="snapRuler">Snap to object or ruler</Name></Line>
      </Frame>
      <Frame $top={0} $bottom={3} $mt={5}>
        <legend>Grid</legend>
        <Divisions id="gridDiv" value={8} />
        <Line $h={12}><Check type="checkbox" id="snapGrid" /><Name htmlFor="snapGrid">Snap to grid</Name></Line>
        <Line $h={12}><Check type="checkbox" id="showGrid" /><Name htmlFor="showGrid">Show grid</Name></Line>
        <Line $h={12}><Name htmlFor="gridColor" $w={35} $muted>Grid color:</Name><Pick id="gridColor" value="Auto" w={47} disabled /></Line>
        <Line $h={11} $gap={2}><Name htmlFor="gridStyle" $w={35} $muted>Grid style:</Name><Pick id="gridStyle" value="Points" w={46} h={11} /></Line>
      </Frame>
      <Line $h={20}><Check type="checkbox" id="region" /><Name htmlFor="region">Show unprintable region</Name></Line>
    </Sheet>
    <DialogFooter $pad="6px 4px 5px"><PushButton $w={36}>OK</PushButton><PushButton $w={37}>Cancel</PushButton><PushButton $w={36}>Help</PushButton></DialogFooter>
  </Dialog>
);

export default function App() {
  return (
    <Window>
      <Global />
      <TitleBar>
        <AppLogo />
        <AppTitle>Document1.btw - BarTender Designer</AppTitle>
        <Caption aria-label="Minimize"><Svg w={6} h={6} box="0 0 6 6"><path d="M0 3.500h5" stroke="#999" strokeWidth=".8" /></Svg></Caption>
        <Caption aria-label="Restore"><Svg w={6} h={6} box="0 0 6 6"><path d="M.5 2h3.500v3.500H.5zM2 2V.5h3.500V4H4" stroke="#999" strokeWidth=".8" /></Svg></Caption>
        <Caption aria-label="Close"><Cross c="#999" /></Caption>
      </TitleBar>
      <MenuBar>
        {['File', 'Edit', 'View', 'Create', 'Arrange', 'Administer', 'Tools', 'Window', 'Help'].map(m => <MenuItem key={m}>{m}</MenuItem>)}
      </MenuBar>
      <ToolRow>
        <Group><Handle /><ToolList items={fileTools} /><Overflow aria-label="More file tools"><More /></Overflow></Group>
        <Group><Handle /><ToolList items={objectTools} /><Overflow aria-label="More object tools"><More /></Overflow></Group>
        <Group><Handle /><ToolList items={viewTools} /><Overflow aria-label="More view tools"><More /></Overflow></Group>
      </ToolRow>
      <ToolRow>
        <Group>
          <Handle />
          <ComboBox aria-label="Font" $w={79} $gap={6} defaultValue="Godex Built-In"><option>Godex Built-In</option></ComboBox>
          <ComboBox aria-label="Font size" $w={28} $gap={5}><option /></ComboBox>
          <ToolList items={textTools} />
          {modes.map(x => <Tool key={x.m} $w={x.w} $on={x.m === 'l'} aria-label={x.name}><Lines mode={x.m} /></Tool>)}
          <Tool aria-label="Fit text">{icons.fitText}</Tool>
          <Sep />
          <Tool aria-label="Resize">{icons.resize}</Tool>
          <Tool aria-label="Wrap">{icons.wrap}</Tool>
          <Overflow aria-label="More text tools"><More /></Overflow>
        </Group>
        <Group>
          <Handle />
          <Tool $w={18} aria-label="Line color">{icons.lineColor}</Tool><Drop $w={7} aria-label="Line color menu"><Arrow /></Drop>
          <Tool $w={18} aria-label="Fill color">{icons.fillColor}</Tool><Drop $w={7} aria-label="Fill color menu"><Arrow /></Drop>
          <StyleBox $w={38}><Thick /><span>1.0 pt</span><Fill /><Arrow /></StyleBox><Sep />
          <StyleBox $w={28} aria-label="Dash style"><Dashes /><Stroke /><Arrow /></StyleBox><Sep />
          <StyleBox $w={28} aria-label="Compound style"><Pair /><Stroke /><Arrow /></StyleBox>
          <Overflow aria-label="More line tools"><More /></Overflow>
        </Group>
      </ToolRow>
      <Workspace>
        <SidePanel>
          <SideTitle>Components</SideTitle>
          <Tree>
            <TreeItem><Cards />Components</TreeItem>
            <TreeItem><Expand /><Folder />Samples</TreeItem>
          </Tree>
          <SideTabs>
            <SideTab $w="42%"><LayersIcon />Layers</SideTab>
            <SideTab $w="56%" $active><PartsIcon />Components</SideTab>
            <SideTab $w="98%"><DataIcon />Data Sources</SideTab>
          </SideTabs>
        </SidePanel>
        <Editor>
          <RulerTop><HorizontalRuler /></RulerTop>
          <RulerLeft><VerticalRuler /></RulerLeft>
          <Canvas><Label /></Canvas>
          <ScrollY><Thumb $vertical /></ScrollY>
          <ScrollX><Thumb /></ScrollX>
          <PageTabs>
            <PageTab $active><PageName $strong>Template 1</PageName></PageTab>
            <PageTab aria-label="Add template"><AddPage /></PageTab>
            <PageTab><PageName>Form 1</PageName></PageTab>
            <PageTab aria-label="Add form"><AddForm /></PageTab>
          </PageTabs>
        </Editor>
        <ArrangeBar>
          {['left', 'right', 'top', 'bottom', 'center', 'middle'].map(k => <ArrangeTool key={k} aria-label={`Align ${k}`}>{arrange[k]}</ArrangeTool>)}
          <ArrangeSep />
          <ArrangeTool aria-label="Distribute across">{arrange.hPage}</ArrangeTool>
          <ArrangeTool aria-label="Distribute down">{arrange.vPage}</ArrangeTool>
          <ArrangeTool $framed aria-label="Center across">{arrange.hBox}</ArrangeTool>
          <ArrangeTool $framed aria-label="Center down">{arrange.vBox}</ArrangeTool>
          <ArrangeSep />
          <ArrangeTool aria-label="Space across">{arrange.hSpace}</ArrangeTool>
          <ArrangeTool aria-label="Space down">{arrange.vSpace}</ArrangeTool>
          <ArrangeSep />
          <ArrangeTool><Turn label="90°" /></ArrangeTool>
          <ArrangeTool><Turn label="180°" both /></ArrangeTool>
          <ArrangeTool><Turn label="90°" cw /></ArrangeTool>
          <ArrangeTool><Turn label="1°" /></ArrangeTool>
        </ArrangeBar>
      </Workspace>
      <StatusBar>
        <StatusCell $w="130px"><PrinterIcon />Printer: Godex G500</StatusCell>
        <StatusCell><SizeIcon />{'Item Width: 4"  Item Height: 4"'}</StatusCell>
        <Fill />
        <StatusCell $w="44px"><Svg w={7} h={7}><circle cx="6.500" cy="6.500" r="5" fill="#d2eefb" stroke="#6a8aa8" strokeWidth="2" /><path d="M10 10l5 5" stroke="#b98a34" strokeWidth="3" /></Svg>145%<Fill /><Arrow /><span /></StatusCell>
      </StatusBar>
      <OptionsDialog />
      <RegionDialog />
    </Window>
  );
}
